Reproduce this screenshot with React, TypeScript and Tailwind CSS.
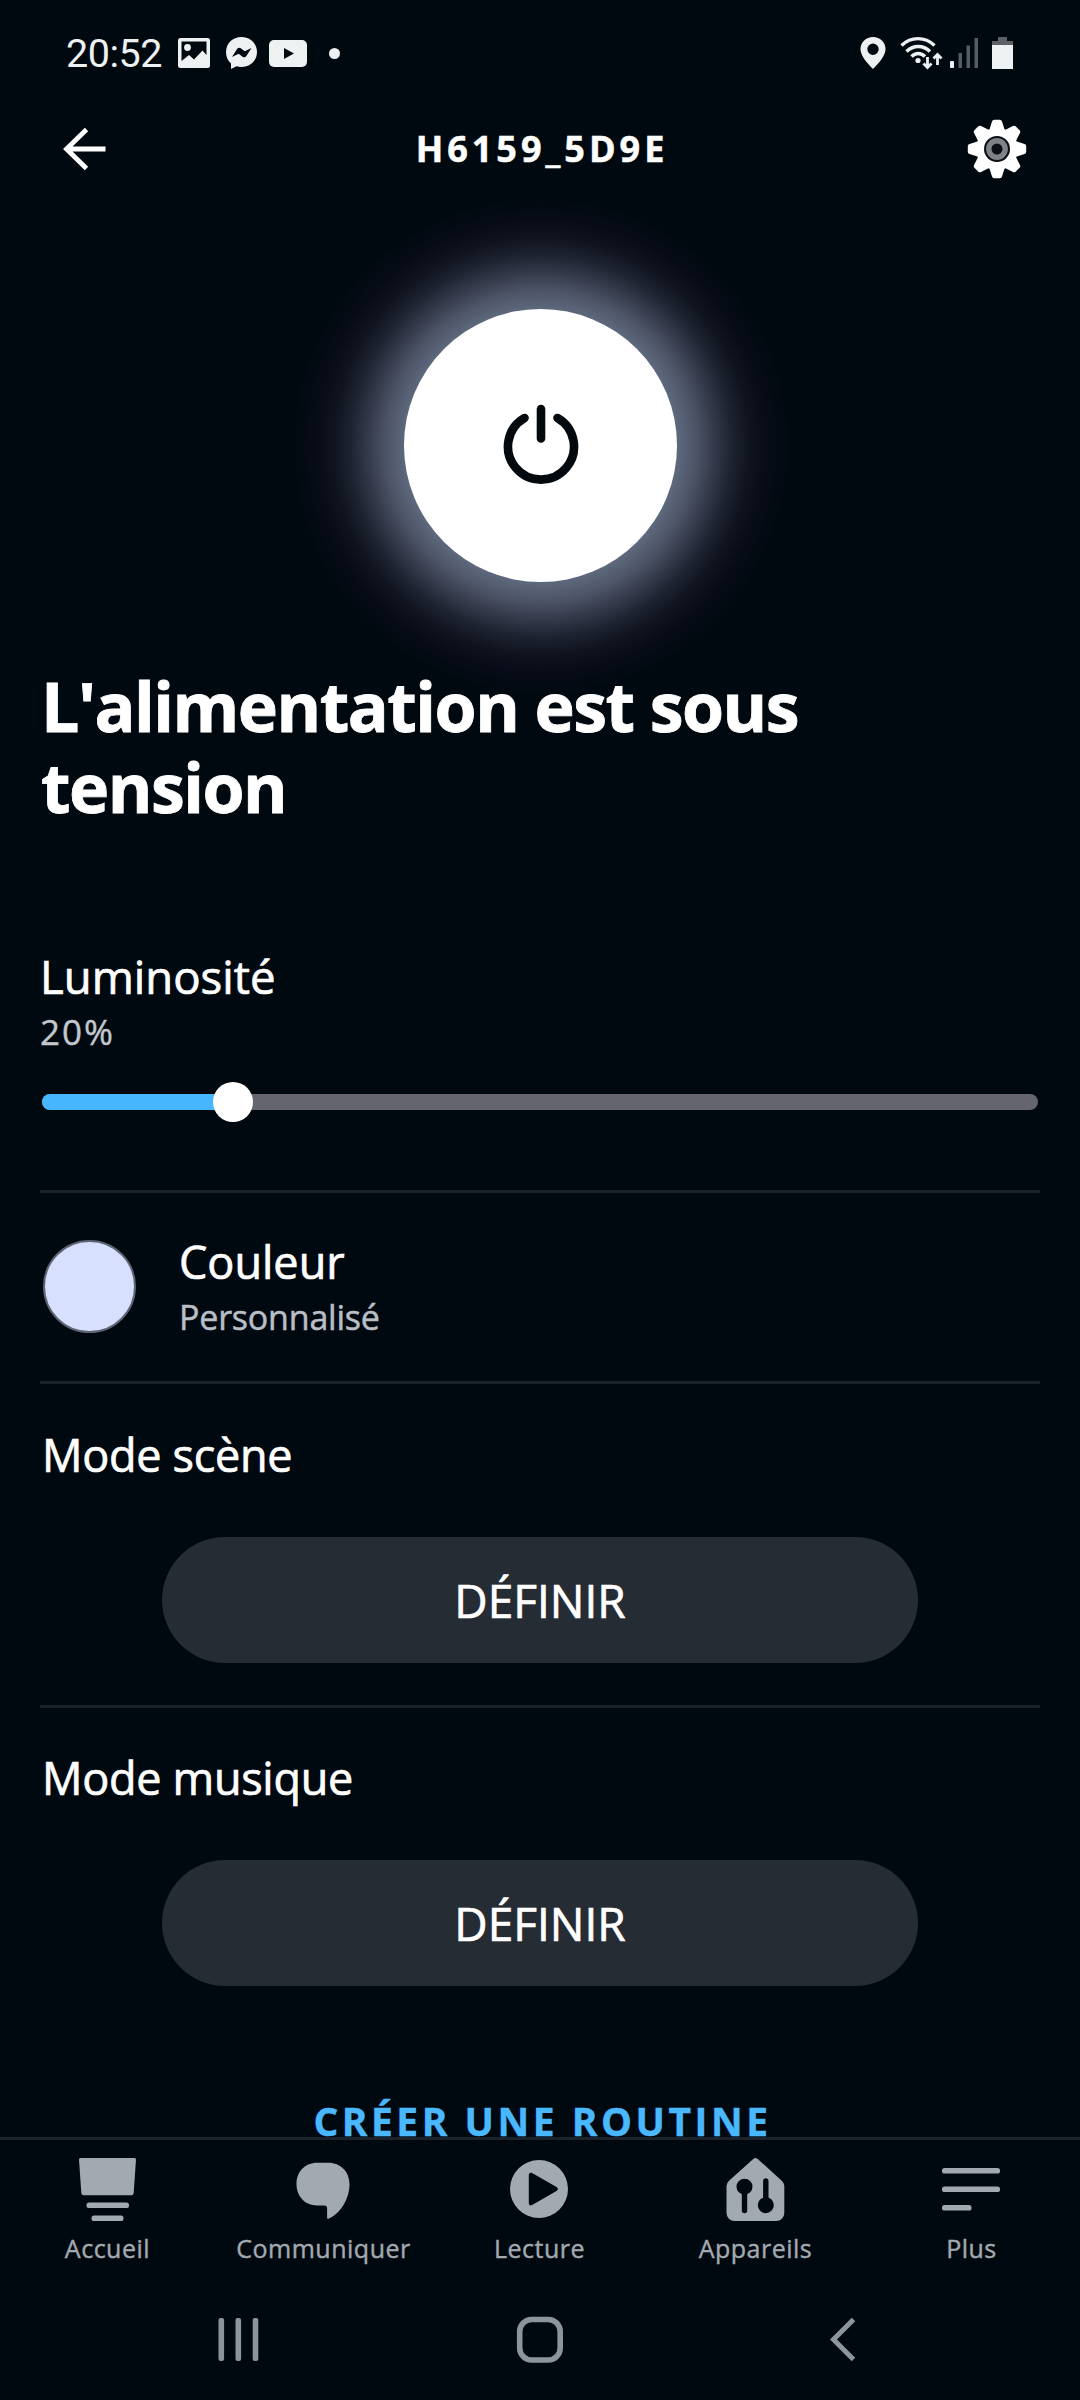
import React from 'react';

function StatusBar() {
  return (
    <div className="flex h-[106px] shrink-0 items-center justify-between pr-[66px] pl-[66px] text-[#eef1f2]">
      <div className="flex items-center">
        <span className="w-[98px] pt-[2px] font-['Roboto',sans-serif] text-[39.500px] leading-[48px] tracking-[-0.500px]">20:52</span>
        <svg className="ml-[14px]" width="32" height="30" viewBox="0 0 32 30" aria-hidden="true">
          <path
            fill="currentColor"
            fillRule="evenodd"
            d="M2.500 0h27A2.500 2.500 0 0 1 32 2.500v25a2.500 2.500 0 0 1-2.500 2.500h-27A2.500 2.500 0 0 1 0 27.500v-25A2.500 2.500 0 0 1 2.500 0zM3.500 3.500V23l7.500-6 5 4.500 8.500-9 4 4.500V3.500z"
          />
          <circle cx="9.500" cy="9.500" r="3.400" fill="currentColor" />
        </svg>
        <svg className="ml-[15px]" width="33" height="32" viewBox="0 0 33 32" aria-hidden="true">
          <path
            fill="currentColor"
            d="M16.500 0C25.500 0 32 6.600 32 15s-6.500 15-15.500 15c-1.800 0-3.400-.2-5-.7L6 32v-5.500C2.800 23.700 1 19.700 1 15 1 6.600 7.500 0 16.500 0z"
          />
          <path d="M7 20l5.200-8.200c.9-1.300 2.400-1.500 3.600-.6l4 3L26.500 11l-5.300 8.200c-.9 1.300-2.400 1.500-3.600.6l-4-3z" fill="#00090f" />
        </svg>
        <svg className="ml-[11px]" width="38" height="27" viewBox="0 0 38 27" aria-hidden="true">
          <rect width="38" height="27" rx="5" fill="currentColor" />
          <path d="M15 8v11l10-5.500z" fill="#00090f" />
        </svg>
        <span className="ml-[22px] size-[11px] rounded-full bg-[#eef1f2]" />
      </div>

      <div className="flex items-center">
        <svg width="26" height="32" viewBox="0 0 26 32" aria-hidden="true">
          <path
            fill="currentColor"
            fillRule="evenodd"
            d="M13 0C20 0 25.500 5.300 25.500 12c0 6-5 12.500-12.500 20C5.500 24.500.5 18 .5 12 .5 5.300 6 0 13 0zm0 6.500a5.700 5.700 0 1 0 0 11.400 5.700 5.700 0 0 0 0-11.400z"
          />
        </svg>
        <svg className="ml-[14px]" width="43" height="34" viewBox="0 0 43 34" fill="none" stroke="currentColor" aria-hidden="true">
          <path d="M1.500 9.500C11 .3 25 .3 34.500 9.500" strokeWidth="3.400" />
          <path d="M6.500 15.500c7-6.700 16.500-6.700 23.500 0" strokeWidth="3.400" />
          <path d="M11.500 20.500c4-4 9.500-4 13.500 0" strokeWidth="3.400" />
          <circle cx="18" cy="24.500" r="2.600" fill="currentColor" stroke="none" />
          <path d="M27.500 21v10M23.500 27.500l4 4 4-4M37.500 29V19M33.500 22.500l4-4 4 4" strokeWidth="2.800" />
        </svg>
        <svg className="ml-[7px]" width="29" height="32" viewBox="0 0 29 32" aria-hidden="true">
          <rect x="0" y="24" width="4" height="7" rx="1" fill="currentColor" />
          <rect x="8.500" y="16" width="3.500" height="15" fill="#555c62" />
          <rect x="16.500" y="8.500" width="3.500" height="22.500" fill="#555c62" />
          <rect x="24.500" y="1" width="3.500" height="30" fill="#555c62" />
        </svg>
        <svg className="ml-[12px]" width="23" height="34" viewBox="0 0 23 34" aria-hidden="true">
          <path d="M7 1h9v4h6v4H1V5h6z" fill="#5b6167" />
          <rect x="1" y="9" width="21" height="24" fill="currentColor" />
        </svg>
      </div>
    </div>
  );
}

const gearTeeth = [0, 45, 90, 135, 180, 225, 270, 315];

function Header() {
  return (
    <header className="flex h-[86px] shrink-0 items-center justify-between pr-[52px] pl-[62px]">
      <button aria-label="Retour" className="w-[60px]">
        <svg width="46" height="46" viewBox="0 0 46 46" fill="none" stroke="#fff" strokeWidth="4.800" aria-hidden="true">
          <path d="M24.500 3.500L4.500 23 24.500 42.500M4.500 23h39" />
        </svg>
      </button>
      <h1 className="mr-[4px] text-[36px] leading-[48px] font-bold tracking-[4px] text-white [-webkit-text-stroke:0.500px]">H6159_5D9E</h1>
      <button aria-label="Paramètres">
        <svg width="62" height="62" viewBox="-31 -31 62 62" aria-hidden="true">
          <circle r="21" fill="#fff" />
          {gearTeeth.map((angle) => (
            <path
              key={angle}
              d="M-8-18L-5-27.500Q-4.500-29.200-2.800-29.200H2.800Q4.500-29.200 5-27.500L8-18z"
              fill="#fff"
              transform={`rotate(${angle})`}
            />
          ))}
          <circle r="13" fill="#0b1016" />
          <circle r="8.200" fill="none" stroke="#7f8286" strokeWidth="5.400" />
        </svg>
      </button>
    </header>
  );
}

function PowerButton() {
  return (
    <div className="flex h-[520px] shrink-0 justify-center bg-[radial-gradient(circle_at_541px_254px,#626e82_0px,#5d687c_137px,#4d5467_155px,#363c4c_172px,#1f2432_190px,#10141f_208px,#070b17_228px,#00090f_252px)] pt-[117px] pl-[1px]">
      <button aria-label="Alimentation" className="flex size-[273px] items-center justify-center rounded-full bg-white">
        <svg width="80" height="86" viewBox="-40 -43 80 86" fill="none" stroke="#02090f" strokeWidth="8.600" strokeLinecap="round" aria-hidden="true">
          <path d="M-16.500-28A33 33 0 1 0 16.500-28M0-37V-7.500" />
        </svg>
      </button>
    </div>
  );
}

function ModeSection({ title, className }: { title: string; className: string }) {
  return (
    <section className={className}>
      <h3 className="pl-[2px] text-[45px] leading-[60px] tracking-[-0.300px] [-webkit-text-stroke:0.700px]">{title}</h3>
      <button className="mx-auto mt-[52px] flex h-[126px] w-[756px] items-center justify-center rounded-full bg-[#262c34] pb-[1px] text-[46px] leading-[60px] [-webkit-text-stroke:0.700px]">
        DÉFINIR
      </button>
    </section>
  );
}

const tabs = [
  {
    label: 'Accueil',
    icon: (
      <>
        <path d="M4.500 3h54a1.500 1.500 0 0 1 1.500 1.600l-2.300 33.400a2.500 2.500 0 0 1-2.500 2.300H7.800a2.500 2.500 0 0 1-2.500-2.300L3 4.600A1.500 1.500 0 0 1 4.500 3z" />
        <rect x="10.500" y="47.500" width="42.500" height="5.600" rx="2.600" />
        <rect x="15.500" y="60.500" width="32" height="5.600" rx="2.600" />
      </>
    ),
  },
  {
    label: 'Communiquer',
    icon: <path d="M25 7.700h11.500C48.500 7.700 57.500 16.500 57.500 29c0 15.500-9.500 29.500-20.500 34.500-1.200.5-1.900.2-1.900-1V53c0-1.700-.9-2.600-2.600-2.600H25c-12 0-20.500-9-20.500-21.400S13 7.700 25 7.700z" />,
  },
  {
    label: 'Lecture',
    icon: (
      <path
        fillRule="evenodd"
        d="M31 5a29 29 0 1 0 0 58 29 29 0 0 0 0-58zM20.800 20c0-1.900 1.600-2.900 3.300-2L48.500 32c1.900 1.100 1.900 2.900 0 4L24.100 50c-1.700 1-3.300 0-3.300-2z"
      />
    ),
  },
  {
    label: 'Appareils',
    icon: (
      <>
        <path d="M29.500 3.800q2-1.600 4 0L57.500 25.500Q60.300 28 60.300 31V58a8 8 0 0 1-8 8H10.500a8 8 0 0 1-8-8V31q0-3 2.800-5.500z" />
        <g fill="#00090f" stroke="#00090f" strokeWidth="5.400" strokeLinecap="round">
          <path d="M20.500 32v23.500M41.800 26v23" />
          <circle cx="20.500" cy="31.700" r="5.300" />
          <circle cx="41.800" cy="50.200" r="5.300" />
        </g>
      </>
    ),
  },
  {
    label: 'Plus',
    icon: (
      <>
        <rect x="2" y="13" width="58" height="5.600" rx="2.600" />
        <rect x="2" y="31.500" width="58" height="5.600" rx="2.600" />
        <rect x="2" y="50" width="29.500" height="5.600" rx="2.600" />
      </>
    ),
  },
];

function TabBar() {
  return (
    <nav className="grid h-[151px] shrink-0 grid-cols-5 border-t-[3px] border-[#1c232b]">
      {tabs.map((tab) => (
        <div key={tab.label} className="flex flex-col items-center pt-[15px] pr-[1px] text-[#a3a9b0]">
          <svg width="63" height="70" viewBox="0 0 63 70" fill="currentColor" aria-hidden="true">
            {tab.icon}
          </svg>
          <span className="mt-[5px] text-[25px] leading-[36px] tracking-[0.500px] [-webkit-text-stroke:0.400px]">{tab.label}</span>
        </div>
      ))}
    </nav>
  );
}

function SystemNav() {
  return (
    <div className="flex flex-1 justify-between pt-[26px] pr-[221px] pl-[216px]">
      <svg width="46" height="50" viewBox="0 0 46 50" fill="#8d949b" aria-hidden="true">
        <rect x="2.500" y="4" width="5.600" height="43" rx="2" />
        <rect x="19.500" y="4" width="5.600" height="43" rx="2" />
        <rect x="36.700" y="4" width="5.600" height="43" rx="2" />
      </svg>
      <svg className="mr-[7px]" width="50" height="50" viewBox="0 0 50 50" aria-hidden="true">
        <rect x="4.700" y="5.500" width="40.500" height="40.500" rx="12" fill="none" stroke="#8d949b" strokeWidth="5.600" />
      </svg>
      <svg width="34" height="50" viewBox="0 0 34 50" fill="none" stroke="#8d949b" strokeWidth="5" aria-hidden="true">
        <path d="M28.500 5.500L8.500 25.500 28.500 45.500" />
      </svg>
    </div>
  );
}

export default function App() {
  const brightness = 190.7;

  return (
    <div className="flex h-[2400px] w-[1080px] flex-col overflow-hidden bg-[#00090f] font-['Open_Sans','Noto_Sans',sans-serif] text-white">
      <StatusBar />
      <Header />

      <main className="flex h-[1945px] shrink-0 flex-col overflow-hidden">
        <PowerButton />

        <h2 className="-mt-[47px] h-[162px] shrink-0 pr-[200px] pl-[41px] text-[68px] leading-[81px] font-bold tracking-[-1.500px] [-webkit-text-stroke:0.800px]">
          L'alimentation est sous tension
        </h2>

        <div className="flex flex-col px-[40px]">
          <section className="h-[366px] border-b-[3px] border-[#1b2129] pt-[119px]">
            <h3 className="text-[45.500px] leading-[60px] [-webkit-text-stroke:0.700px]">Luminosité</h3>
            <p className="mt-[2px] text-[35px] leading-[48px] tracking-[2px] text-[#c3c8ce] [-webkit-text-stroke:0.400px]">20%</p>
            <div className="relative mx-[2px] mt-[38px] h-[16px] rounded-full bg-[#65656f]">
              <div className="h-full rounded-l-full bg-[#46b6ff]" style={{ width: brightness }} />
              <div className="absolute -top-[12px] size-[40px] -translate-x-1/2 rounded-full bg-white" style={{ left: brightness }} />
            </div>
          </section>

          <section className="flex h-[191px] items-center border-b-[3px] border-[#1b2129] pl-[3px]">
            <div className="mb-[1px] size-[93px] rounded-full border-2 border-[#5d6472] bg-[#d8e0ff]" />
            <div className="ml-[43px] pb-[1px]">
              <h3 className="text-[45px] leading-[60px] [-webkit-text-stroke:0.700px]">Couleur</h3>
              <p className="mt-[1px] text-[34px] leading-[48px] tracking-[-0.200px] text-[#b9bfc6] [-webkit-text-stroke:0.500px]">Personnalisé</p>
            </div>
          </section>

          <ModeSection title="Mode scène" className="h-[324px] border-b-[3px] border-[#1b2129] pt-[41px]" />
          <ModeSection title="Mode musique" className="h-[324px] pt-[40px]" />
        </div>

        <p className="mt-[59px] shrink-0 pl-[5px] text-center text-[39px] leading-[60px] font-bold tracking-[3.500px] text-[#4ab8ff] [-webkit-text-stroke:0.400px]">
          CRÉER UNE ROUTINE
        </p>
      </main>

      <TabBar />
      <SystemNav />
    </div>
  );
}
